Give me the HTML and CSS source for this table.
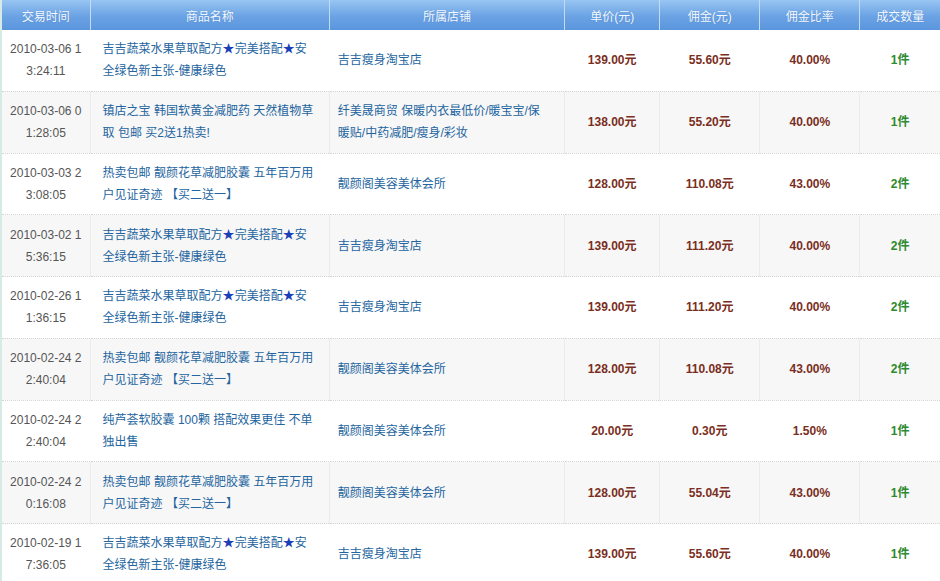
FILE: index.html
```html
<!DOCTYPE html>
<html lang="zh-CN">
<head>
<meta charset="utf-8">
<title>成交记录</title>
<link rel="stylesheet" href="styles.css">
</head>
<body>
<table class="deals">
  <colgroup>
    <col class="c-time"><col class="c-name"><col class="c-shop"><col class="c-price"><col class="c-comm"><col class="c-rate"><col class="c-qty">
  </colgroup>
  <thead>
    <tr><th>交易时间</th><th>商品名称</th><th>所属店铺</th><th>单价(元)</th><th>佣金(元)</th><th>佣金比率</th><th>成交数量</th></tr>
  </thead>
  <tbody>
    <tr>
      <td class="time">2010-03-06 1<br>3:24:11</td>
      <td class="name">吉吉蔬菜水果草取配方<span class="star">★</span>完美搭配<span class="star">★</span>安<br>全绿色新主张-健康绿色</td>
      <td class="shop">吉吉瘦身淘宝店</td>
      <td class="money">139.00元</td><td class="money">55.60元</td><td class="money">40.00%</td><td class="qty">1件</td>
    </tr>
    <tr>
      <td class="time">2010-03-06 0<br>1:28:05</td>
      <td class="name">镇店之宝 韩国软黄金减肥药 天然植物草<br>取 包邮 买2送1热卖!</td>
      <td class="shop">纤美晟商贸 保暖内衣最低价/暖宝宝/保<br>暖贴/中药减肥/瘦身/彩妆</td>
      <td class="money">138.00元</td><td class="money">55.20元</td><td class="money">40.00%</td><td class="qty">1件</td>
    </tr>
    <tr>
      <td class="time">2010-03-03 2<br>3:08:05</td>
      <td class="name">热卖包邮 靓颜花草减肥胶囊 五年百万用<br>户见证奇迹 【买二送一】</td>
      <td class="shop">靓颜阁美容美体会所</td>
      <td class="money">128.00元</td><td class="money">110.08元</td><td class="money">43.00%</td><td class="qty">2件</td>
    </tr>
    <tr>
      <td class="time">2010-03-02 1<br>5:36:15</td>
      <td class="name">吉吉蔬菜水果草取配方<span class="star">★</span>完美搭配<span class="star">★</span>安<br>全绿色新主张-健康绿色</td>
      <td class="shop">吉吉瘦身淘宝店</td>
      <td class="money">139.00元</td><td class="money">111.20元</td><td class="money">40.00%</td><td class="qty">2件</td>
    </tr>
    <tr>
      <td class="time">2010-02-26 1<br>1:36:15</td>
      <td class="name">吉吉蔬菜水果草取配方<span class="star">★</span>完美搭配<span class="star">★</span>安<br>全绿色新主张-健康绿色</td>
      <td class="shop">吉吉瘦身淘宝店</td>
      <td class="money">139.00元</td><td class="money">111.20元</td><td class="money">40.00%</td><td class="qty">2件</td>
    </tr>
    <tr>
      <td class="time">2010-02-24 2<br>2:40:04</td>
      <td class="name">热卖包邮 靓颜花草减肥胶囊 五年百万用<br>户见证奇迹 【买二送一】</td>
      <td class="shop">靓颜阁美容美体会所</td>
      <td class="money">128.00元</td><td class="money">110.08元</td><td class="money">43.00%</td><td class="qty">2件</td>
    </tr>
    <tr>
      <td class="time">2010-02-24 2<br>2:40:04</td>
      <td class="name">纯芦荟软胶囊 100颗 搭配效果更佳 不单<br>独出售</td>
      <td class="shop">靓颜阁美容美体会所</td>
      <td class="money">20.00元</td><td class="money">0.30元</td><td class="money">1.50%</td><td class="qty">1件</td>
    </tr>
    <tr>
      <td class="time">2010-02-24 2<br>0:16:08</td>
      <td class="name">热卖包邮 靓颜花草减肥胶囊 五年百万用<br>户见证奇迹 【买二送一】</td>
      <td class="shop">靓颜阁美容美体会所</td>
      <td class="money">128.00元</td><td class="money">55.04元</td><td class="money">43.00%</td><td class="qty">1件</td>
    </tr>
    <tr>
      <td class="time">2010-02-19 1<br>7:36:05</td>
      <td class="name">吉吉蔬菜水果草取配方<span class="star">★</span>完美搭配<span class="star">★</span>安<br>全绿色新主张-健康绿色</td>
      <td class="shop">吉吉瘦身淘宝店</td>
      <td class="money">139.00元</td><td class="money">55.60元</td><td class="money">40.00%</td><td class="qty">1件</td>
    </tr>
  </tbody>
</table>
</body>
</html>
```

FILE: styles.css
```css
html, body {
  margin: 0;
  padding: 0;
  background: #ffffff;
}
body {
  font-family: "Liberation Sans", "Noto Sans CJK SC", sans-serif;
  font-size: 12px;
  color: #555555;
}
.deals {
  width: 940px;
  table-layout: fixed;
  border-collapse: collapse;
  border-left: 2px solid #d6ebe6;
}
.c-time { width: 89px; }
.c-name { width: 239px; }
.c-shop { width: 235px; }
.c-price { width: 95px; }
.c-comm { width: 100px; }
.c-rate { width: 100px; }
.c-qty { width: 80px; }

.deals th {
  height: 30px;
  padding: 0;
  font-weight: normal;
  color: #f4f9ff;
  text-align: center;
  background: linear-gradient(#98c5f2, #6aa2e4 55%, #5b95dc);
  border-right: 1px solid #c2dcf6;
  text-shadow: 0 0 1px rgba(40, 90, 160, 0.4);
}
.deals th:last-child { border-right: none; }

.deals td {
  height: 60.75px;
  padding: 0;
  line-height: 22px;
  vertical-align: middle;
  border-bottom: 1px dotted #d4d4d4;
  border-right: 1px solid transparent;
}
.deals tbody tr:nth-child(even) td {
  background: #f7f7f7;
  border-right: 1px solid #ebebeb;
}
.deals tbody tr td:last-child { border-right: none; }

.time {
  text-align: center;
  color: #555555;
}
.name {
  padding-left: 12px !important;
  color: #2465a0;
  white-space: nowrap;
}
.star { color: #1b3fb8; }
.shop {
  padding-left: 8px !important;
  color: #2465a0;
  white-space: nowrap;
}
.money {
  text-align: center;
  font-weight: bold;
  color: #7a2e22;
}
.qty {
  text-align: center;
  font-weight: bold;
  color: #2e8a2e;
}
```
